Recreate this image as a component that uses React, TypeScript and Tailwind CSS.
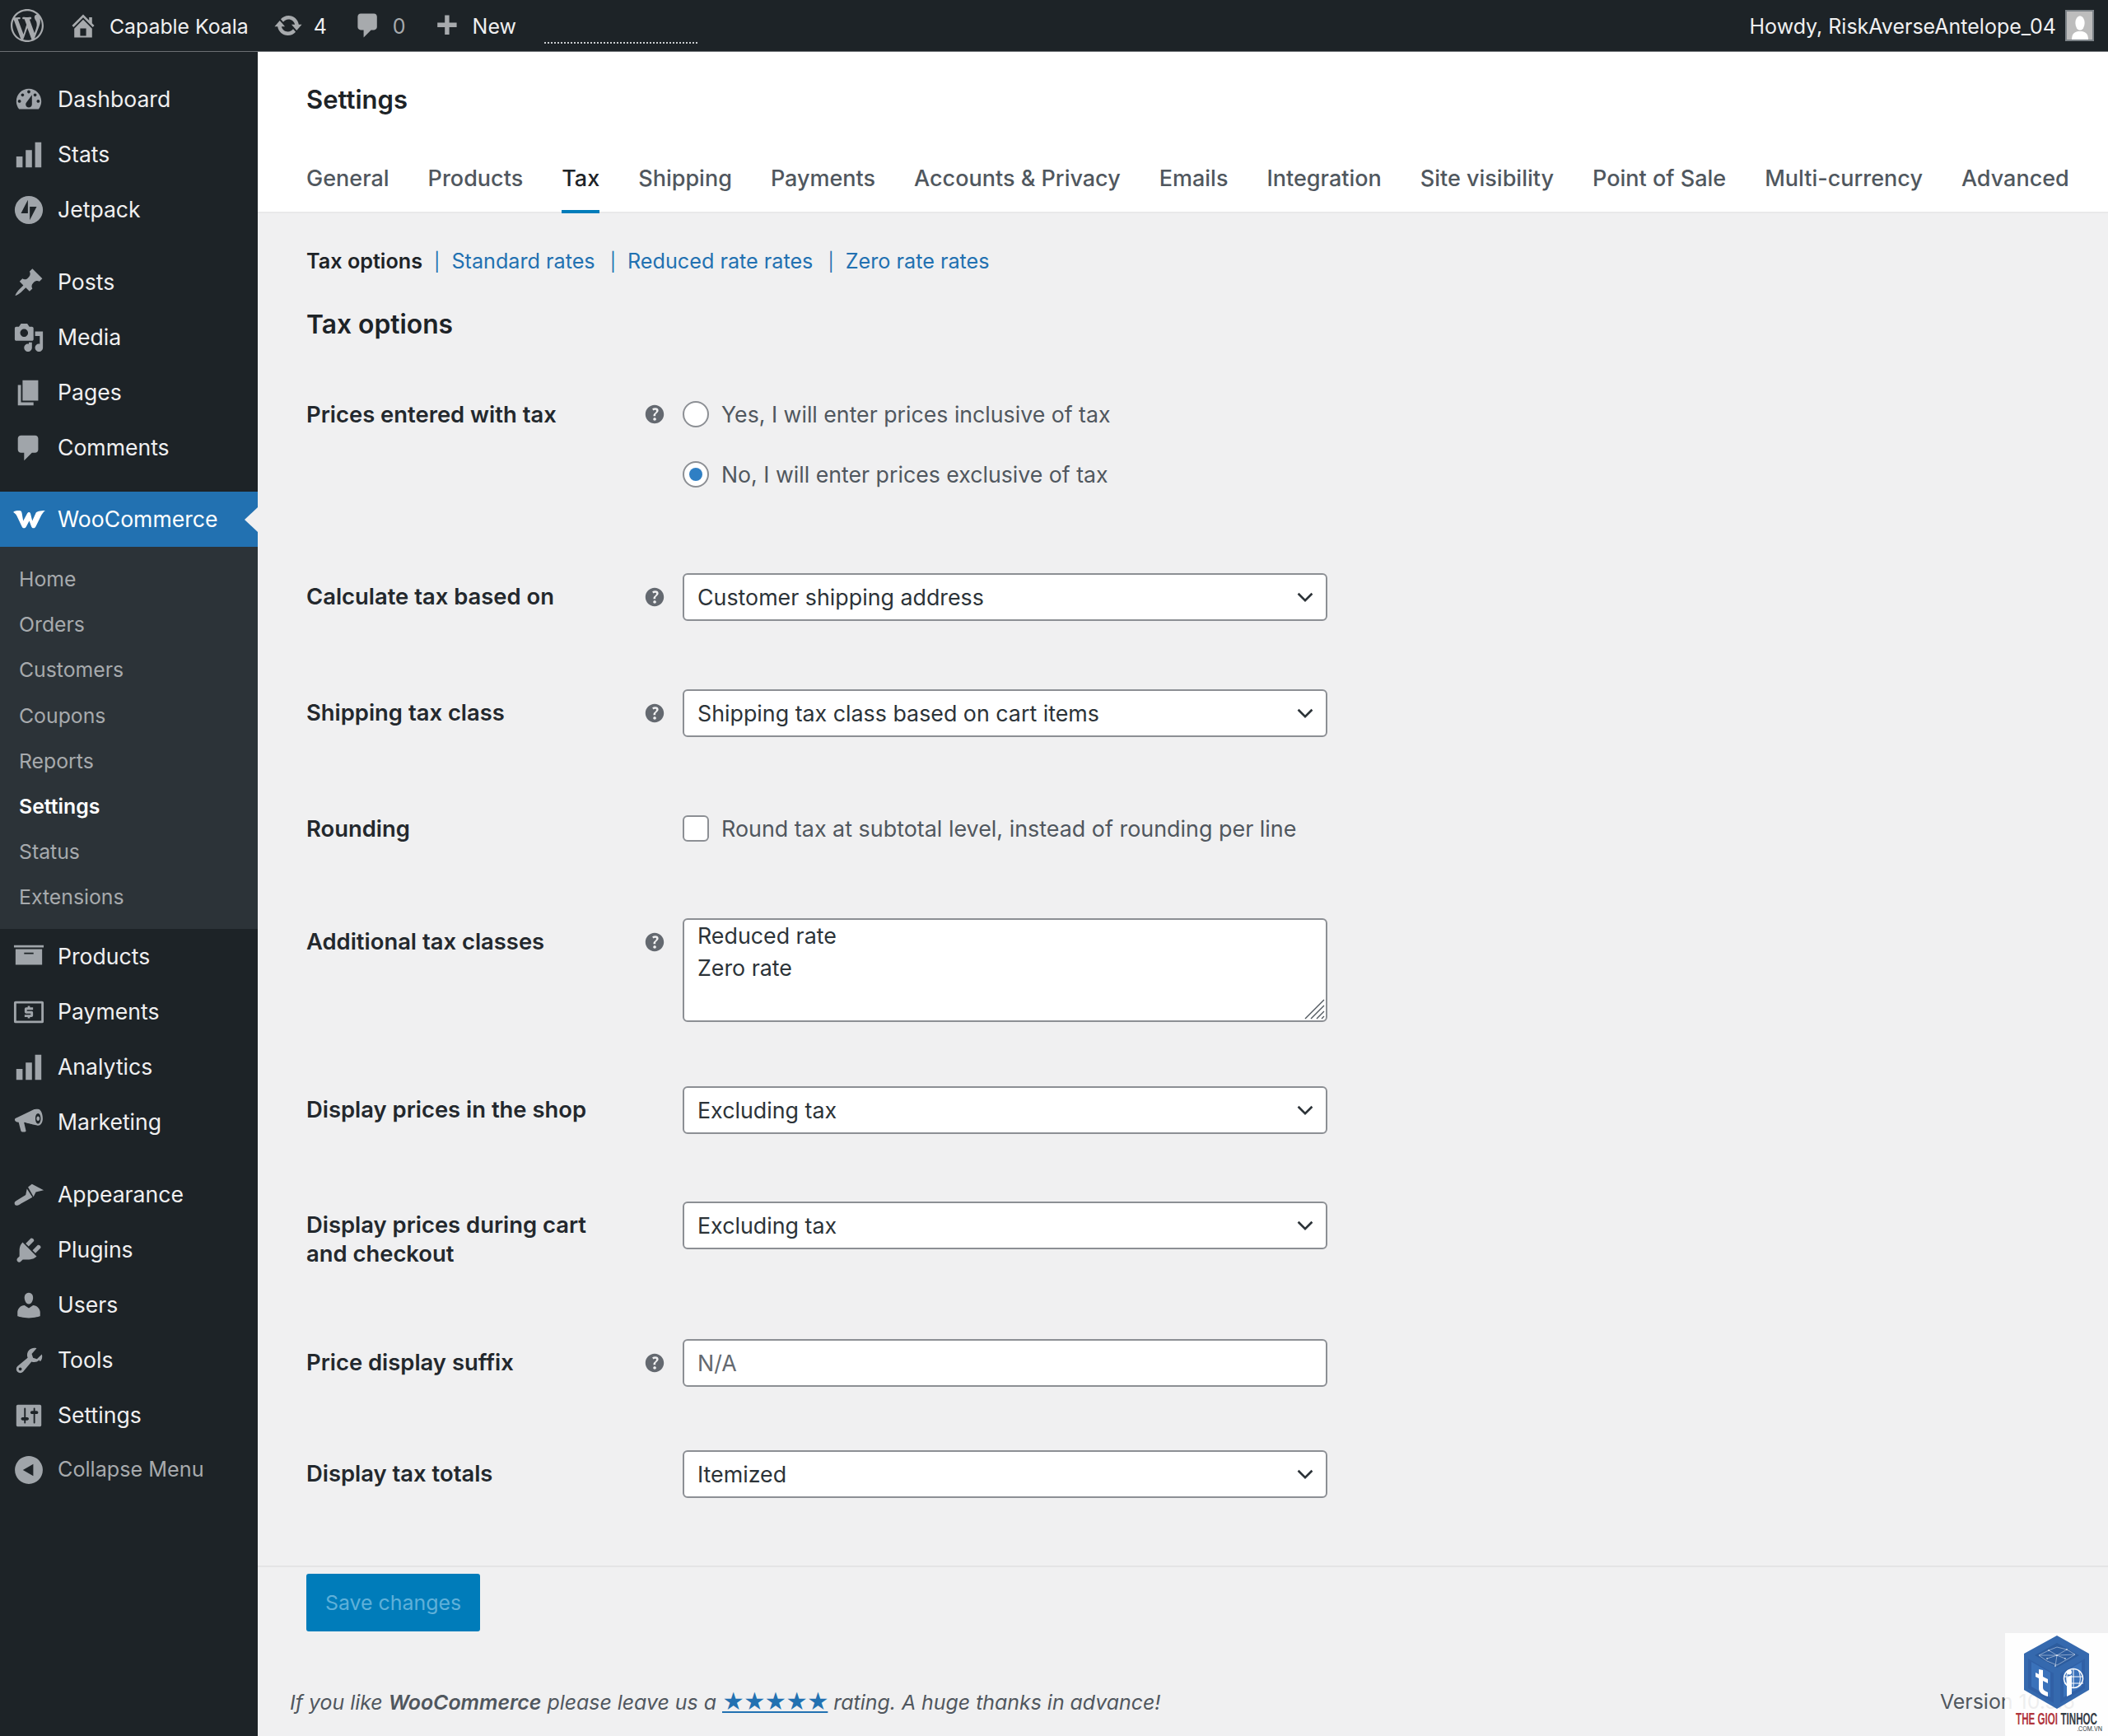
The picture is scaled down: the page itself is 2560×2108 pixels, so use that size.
import React from "react";

const D: Record<string, string> = {
  dashboard: "M3.76 16h12.48c1.1-1.37 1.76-3.11 1.76-5 0-4.42-3.58-8-8-8s-8 3.58-8 8c0 1.89.66 3.63 1.76 5zM10 4c.55 0 1 .45 1 1s-.45 1-1 1-1-.45-1-1 .45-1 1-1zM6 6c.55 0 1 .45 1 1s-.45 1-1 1-1-.45-1-1 .45-1 1-1zm8 0c.55 0 1 .45 1 1s-.45 1-1 1-1-.45-1-1 .45-1 1-1zm-5.37 5.55L12 7v6c0 1.1-.9 2-2 2s-2-.9-2-2c0-.57.24-1.08.63-1.45zM4 10c.55 0 1 .45 1 1s-.45 1-1 1-1-.45-1-1 .45-1 1-1zm12 0c.55 0 1 .45 1 1s-.45 1-1 1-1-.45-1-1 .45-1 1-1z",
  stats: "M2 11h4v7H2zM8 7h4v11H8zM14 2h4v16h-4z",
  jetpack: "M10 1a9 9 0 1 0 0 18 9 9 0 0 0 0-18zM9.4 3.5v8.6H5L9.4 3.5zM10.6 16.5V7.9H15l-4.4 8.6z",
  posts: "M10.44 3.02l1.82-1.82 6.36 6.35-1.83 1.82c-1.05-.68-2.48-.57-3.41.36l-.75.75c-.92.93-1.04 2.35-.35 3.41l-1.83 1.82-2.41-2.41-2.8 2.79c-.42.42-3.38 2.71-3.8 2.29s1.86-3.39 2.28-3.81l2.79-2.79L4.1 9.36l1.83-1.82c1.05.69 2.48.57 3.4-.36l.75-.75c.93-.92 1.05-2.35.36-3.41z",
  media: "M13 11V4c0-.55-.45-1-1-1h-1.67L9 1H5L3.67 3H2c-.55 0-1 .45-1 1v7c0 .55.45 1 1 1h10c.55 0 1-.45 1-1zM7 4.5c1.38 0 2.5 1.12 2.5 2.5S8.38 9.5 7 9.5 4.5 8.38 4.5 7 5.62 4.5 7 4.5zM14 6h5v10.5c0 1.38-1.12 2.5-2.5 2.5S14 17.88 14 16.5s1.12-2.5 2.5-2.5c.17 0 .34.02.5.05V9h-3V6zm-4 8.05V13h2v3.5c0 1.38-1.12 2.5-2.5 2.5S7 17.88 7 16.5 8.12 14 9.5 14c.17 0 .34.02.5.05z",
  pages: "M6 15V2h10v13H6zm-1 1h8v2H3V5h2v11z",
  comments: "M5 2h9c1.1 0 2 .9 2 2v7c0 1.1-.9 2-2 2h-2l-5 5v-5H5c-1.1 0-2-.9-2-2V4c0-1.1.9-2 2-2z",
  products: "M.5 2.5h19v1.5H.5zM1.5 5h17v10h-17zM7 7.2v1h6v-1z",
  payments: "M1.5 3h17a1 1 0 0 1 1 1v12a1 1 0 0 1-1 1h-17a1 1 0 0 1-1-1V4a1 1 0 0 1 1-1zM2 4.5v11h16v-11zM9.3 6h1.4v1h2v1.5H8.8v.8h3a1 1 0 0 1 .9 1v2a1 1 0 0 1-1 .9h-1v.8H9.3v-.8h-2v-1.5h3.9v-.8H8.200a1 1 0 0 1-.9-1V8a1 1 0 0 1 1-1h1z",
  marketing: "M18.9 7.5c0 2.5-1.3 4.5-3 4.5-1 0-9-2.1-9-2.1l1.2 5.100c.2.6-.1 1-.7 1H5.800c-.4 0-.8-.3-.9-.7L3.500 9.900C1.900 9.700 1 9 1 8.100c0-.8.9-1 2.100-1.500l9.800-4.700c1-.5 2-.4 2.900-.4 1.700 0 3.100 2.600 3.100 6zM15.900 4.200c-1 0-1.700 1.500-1.700 3.300s.7 3.300 1.700 3.300 1.700-1.500 1.700-3.300-.7-3.300-1.700-3.300zM15.900 6c.6 0 1 .7 1 1.500S16.500 9 15.900 9s-1-.7-1-1.500.4-1.500 1-1.500z",
  appearance: "M9.5 5L12 3l7.5 4-5 1.2-1.5 3zM8.800 6l3.500 5.500-2.300 1.200L5 15.500c-1 .8-2 1.200-3 1.200-1 0-1.500-1.500-.8-2.300.5-.7 1.500-1.200 2.300-1.700L8 10z",
  plugins: "M13.11 4.36L9.87 7.6 8 5.73l3.24-3.24c.35-.34 1.05-.2 1.56.32.52.51.66 1.21.31 1.55zm-8 1.77l.91-1.12 9.01 9.01-1.19.84c-.71.71-2.63 1.16-3.82 1.16H6.14L4.9 17.26c-.59.59-1.54.59-2.12 0-.59-.58-.59-1.53 0-2.12l1.24-1.24v-3.88c0-1.13.38-3.19 1.09-3.89zm7.26 3.97l3.24-3.24c.34-.35 1.04-.21 1.55.31.52.51.66 1.21.31 1.55l-3.24 3.25z",
  users: "M10 9.25c-2.27 0-2.73-3.44-2.73-3.44C7 4.02 7.82 2 9.97 2c2.16 0 2.98 2.02 2.71 3.81 0 0-.41 3.44-2.68 3.44zm0 2.57L12.72 10c2.39 0 4.52 2.33 4.52 4.53v2.49s-3.65 1.13-7.24 1.13c-3.65 0-7.24-1.13-7.24-1.13v-2.49c0-2.25 1.94-4.48 4.47-4.48z",
  tools: "M16.68 9.77c-1.34 1.34-3.3 1.67-4.95.99l-5.41 6.52c-.99.99-2.59.99-3.58 0s-.99-2.59 0-3.57l6.52-5.42c-.68-1.65-.35-3.61.99-4.95 1.28-1.28 3.12-1.64 4.72-1.11L11.88 5.82 12.7 8.3l2.49.83 3.13-3.13c.53 1.6.17 3.44-1.11 4.72zM3.81 16.21c.4.39 1.03.39 1.42 0 .4-.4.4-1.03 0-1.43-.39-.39-1.02-.39-1.42 0a1 1 0 0 0 0 1.43z",
  settings: "M18 16V4c0-.55-.45-1-1-1H3c-.55 0-1 .45-1 1v12c0 .55.45 1 1 1h14c.55 0 1-.45 1-1zM8 11h1c.55 0 1 .45 1 1s-.45 1-1 1H8v1.500c0 .28-.22.5-.5.5s-.5-.22-.5-.5V13H6c-.55 0-1-.45-1-1s.45-1 1-1h1V5.500c0-.28.22-.5.5-.5s.5.22.5.5V11zm5-2h-1c-.55 0-1-.45-1-1s.45-1 1-1h1V5.500c0-.28.22-.5.5-.5s.5.22.5.5V7h1c.55 0 1 .45 1 1s-.45 1-1 1h-1v5.500c0 .28-.22.5-.5.5s-.5-.22-.5-.5V9z",
  collapse: "M10 .6c5.2 0 9.4 4.2 9.4 9.4s-4.2 9.4-9.4 9.4S.6 15.2.6 10 4.8.6 10 .6zM13 14V6l-7 4z",
  wp: "M20 10c0-5.51-4.49-10-10-10C4.48 0 0 4.49 0 10c0 5.52 4.48 10 10 10 5.51 0 10-4.48 10-10zM7.78 15.37L4.37 6.22c.55-.02 1.17-.08 1.17-.08.5-.06.44-1.13-.06-1.11 0 0-1.45.11-2.37.11-.18 0-.37 0-.58-.01C4.12 2.69 6.87 1.11 10 1.11c2.33 0 4.45.87 6.05 2.34-.68-.11-1.65.39-1.65 1.58 0 .74.45 1.36.9 2.1.35.61.55 1.36.55 2.46 0 1.49-1.4 5-1.4 5l-3.03-8.35c.54-.02.82-.17.82-.17.5-.05.44-1.25-.06-1.22 0 0-1.44.12-2.38.12-.87 0-2.33-.12-2.33-.12-.5-.03-.56 1.2-.06 1.22l.92.08 1.26 3.41zM17.41 10c.24-.64.74-1.87.43-4.25.7 1.29 1.05 2.71 1.05 4.25 0 3.29-1.73 6.24-4.4 7.78.97-2.59 1.94-5.2 2.92-7.78zM6.1 18.09C3.12 16.65 1.11 13.53 1.11 10c0-1.3.23-2.48.72-3.59C3.25 10.3 4.67 14.2 6.1 18.09zm4.03-6.63l2.58 6.98c-.85.29-1.74.45-2.71.45-.81 0-1.61-.11-2.35-.34 0 0 2.48-7.09 2.48-7.09z",
  home: "M16 8.5l1.53 1.53-1.06 1.06L10 4.62l-6.47 6.47-1.06-1.06L10 2.5l4 4v-2h2v4zm-6-2.46l6 5.99V18H4v-5.97zM12 17v-5H8v5h4z",
  update: "M10.2 3.28c3.53 0 6.43 2.61 6.92 6h2.08l-3.5 4-3.5-4h2.32c-.45-1.97-2.21-3.44-4.32-3.44-1.45 0-2.73.71-3.54 1.78L4.95 5.66C6.23 4.2 8.11 3.28 10.2 3.28zm-.4 13.44c-3.52 0-6.43-2.61-6.92-6H.8l3.5-4c1.17 1.33 2.33 2.67 3.5 4H5.48c.45 1.97 2.21 3.44 4.32 3.44 1.45 0 2.73-.71 3.54-1.78l1.71 1.95c-1.28 1.46-3.15 2.39-5.25 2.39z",
  plus: "M17 7v3h-5v5H9v-5H4V7h5V2h3v5h5z",
  help: "M17 10c0-3.87-3.13-7-7-7s-7 3.13-7 7 3.13 7 7 7 7-3.13 7-7zm-6.3 1.48H9.06v-.48c0-.41.08-.76.24-1.04.16-.29.46-.61.9-.97.42-.34.7-.62.84-.83.14-.21.21-.47.21-.76 0-.22-.08-.4-.22-.52-.15-.12-.36-.18-.63-.18-.5 0-.91.14-1.5.42l-.68-1.39c.7-.39 1.51-.6 2.31-.6.72 0 1.29.18 1.71.53.42.35.63.84.63 1.46 0 .28-.04.52-.12.74-.08.22-.21.43-.38.63s-.46.47-.87.81c-.33.26-.55.48-.66.65-.11.17-.14.3-.14.53zm-1.78 2.27c0-.36.09-.65.29-.84.19-.19.47-.29.83-.29.35 0 .63.1.82.29.19.2.29.48.29.84 0 .34-.1.62-.3.83-.2.2-.47.31-.81.31s-.62-.11-.83-.31c-.19-.2-.29-.49-.29-.83z",
};

function Dash({ name, className }: { name: string; className: string }) {
  return (
    <svg viewBox="0 0 20 20" className={className} fill="currentColor">
      <path d={D[name]} fillRule="evenodd" />
    </svg>
  );
}

function Side({ icon, label }: { icon: string; label: string }) {
  return (
    <div className="flex h-[67px] items-center">
      <div className="flex w-[70px] justify-center">
        <Dash name={icon} className="h-[38px] w-[38px] text-[#a0a5aa]" />
      </div>
      <span className="text-[26.6px] text-[#f0f0f1]">{label}</span>
    </div>
  );
}

function Sub({ label, on }: { label: string; on?: boolean }) {
  return (
    <div className={"flex h-[55.2px] items-center pl-[23px] text-[24.8px] " + (on ? "font-semibold text-white" : "text-[#a7aaad]")}>
      {label}
    </div>
  );
}

function Help() {
  return <Dash name="help" className="ml-[-1px] h-[32px] w-[32px] text-[#646970]" />;
}

function Label({ children }: { children: React.ReactNode }) {
  return <div className="w-[408px] shrink-0 pr-[30px] pt-[11px] text-[27.4px] font-semibold leading-[35px] text-[#23282d]">{children}</div>;
}

function HelpCell({ show }: { show?: boolean }) {
  return <div className="w-[49px] shrink-0 pt-[13px]">{show ? <Help /> : null}</div>;
}

function Select({ value }: { value: string }) {
  return (
    <div className="relative h-[58px] w-[783px]">
      <select
        defaultValue={value}
        className="h-full w-full appearance-none rounded-[6px] border-2 border-[#8c8f94] bg-white pl-[16px] text-[26.8px] text-[#2c3338] outline-none"
      >
        <option>{value}</option>
      </select>
      <svg viewBox="0 0 20 20" className="pointer-events-none absolute right-[15px] top-[17px] h-[24px] w-[24px]" fill="none" stroke="#2c3338" strokeWidth="2.2">
        <path d="M3 6.5l7 7 7-7" />
      </svg>
    </div>
  );
}

const tabs = ["General", "Products", "Tax", "Shipping", "Payments", "Accounts & Privacy", "Emails", "Integration", "Site visibility", "Point of Sale", "Multi-currency", "Advanced"];

export default function App() {
  return (
    <div className="relative flex h-[2108px] w-[2560px] flex-col overflow-hidden bg-[#f0f0f1]" style={{ fontFamily: "Inter, 'Liberation Sans', sans-serif" }}>
      {/* Admin bar */}
      <header className="flex h-[63px] shrink-0 items-center justify-between border-b border-[#6b6f73] bg-[#1d2327] text-[25px] text-[#f0f0f1]">
        <div className="flex items-center">
          <Dash name="wp" className="ml-[13px] h-[40px] w-[40px] text-[#a7aaad]" />
          <Dash name="home" className="ml-[30px] h-[36px] w-[36px] text-[#a7aaad]" />
          <span className="ml-[14px] mt-[3px] text-[24.8px]">Capable Koala</span>
          <Dash name="update" className="ml-[30px] h-[36px] w-[36px] text-[#a7aaad]" />
          <span className="ml-[13px] mt-[3px]">4</span>
          <Dash name="comments" className="ml-[32px] h-[36px] w-[36px] text-[#a7aaad]" />
          <span className="ml-[12px] mt-[3px] text-[#a7aaad]">0</span>
          <Dash name="plus" className="ml-[31px] mt-[3px] h-[36px] w-[36px] text-[#a7aaad]" />
          <span className="ml-[14px] mt-[3px]">New</span>
          <div className="ml-[34px] mt-[42px] h-0 w-[186px] border-t-2 border-dotted border-[#c9cccf]"></div>
        </div>
        <div className="mr-[17px] flex items-center">
          <span className="mt-[3px]">Howdy, RiskAverseAntelope_04</span>
          <div className="ml-[11px] flex h-[38px] w-[35px] items-end justify-center overflow-hidden border-2 border-[#7d8388] bg-[#bdbdbd]">
            <svg viewBox="0 0 20 24" className="h-[30px] w-[26px]" fill="#fff">
              <ellipse cx="10" cy="8" rx="4.5" ry="7" />
              <path d="M2 24c0-6 3-8 8-8s8 2 8 8z" />
            </svg>
          </div>
        </div>
      </header>

      <div className="flex flex-1">
        {/* Sidebar */}
        <nav className="flex w-[313px] shrink-0 flex-col bg-[#1d2327] pt-[24px]">
          <Side icon="dashboard" label="Dashboard" />
          <Side icon="stats" label="Stats" />
          <Side icon="jetpack" label="Jetpack" />
          <div className="h-[21px]"></div>
          <Side icon="posts" label="Posts" />
          <Side icon="media" label="Media" />
          <Side icon="pages" label="Pages" />
          <Side icon="comments" label="Comments" />
          <div className="h-[20px]"></div>
          <div className="relative flex h-[67px] items-center bg-[#2271b1]">
            <div className="flex w-[70px] justify-center">
              <svg viewBox="0 0 38 21" className="h-[22px] w-[40px]" fill="#fff">
                <path d="M1 2C2 .5 4 0 8 0c2 0 2.5 1 3 3l1.500 9L17 3.500c1-2 3.500-2 4 0L23 12l4-9c1-2.200 5-3 11-3-2 1.500-4 4-5.500 7.500L27 18.500C25.700 21 23 21 22 18.500L19.500 12 16 18.500C14.700 21 12 21 11 18.500L5 6C4 4 2.500 3 1 2z" />
              </svg>
            </div>
            <span className="text-[26.6px] text-white">WooCommerce</span>
            <div className="absolute right-0 top-1/2 h-0 w-0 -translate-y-1/2 border-y-[15px] border-r-[16px] border-y-transparent border-r-[#f0f0f1]"></div>
          </div>
          <div className="bg-[#2c3338] pb-[10px] pt-[12px]">
            {["Home", "Orders", "Customers", "Coupons", "Reports"].map((s) => (
              <Sub key={s} label={s} />
            ))}
            <Sub label="Settings" on />
            <Sub label="Status" />
            <Sub label="Extensions" />
          </div>
          <div className="h-[1px]"></div>
          <Side icon="products" label="Products" />
          <Side icon="payments" label="Payments" />
          <Side icon="stats" label="Analytics" />
          <Side icon="marketing" label="Marketing" />
          <div className="h-[21px]"></div>
          <Side icon="appearance" label="Appearance" />
          <Side icon="plugins" label="Plugins" />
          <Side icon="users" label="Users" />
          <Side icon="tools" label="Tools" />
          <Side icon="settings" label="Settings" />
          <div className="flex h-[64px] items-center">
            <div className="flex w-[70px] justify-center">
              <Dash name="collapse" className="h-[36px] w-[36px] text-[#a0a5aa]" />
            </div>
            <span className="text-[25.2px] text-[#a7aaad]">Collapse Menu</span>
          </div>
        </nav>

        {/* Main */}
        <main className="flex flex-1 flex-col">
          <div className="h-[196px] shrink-0 border-b-2 border-[#e9e9ea] bg-white pl-[59px]">
            <h1 className="pt-[38px] text-[31px] font-semibold leading-[40px] text-[#1d2327]">Settings</h1>
            <div className="mt-[35px] flex gap-[47px]">
              {tabs.map((t) => (
                <div
                  key={t}
                  className={
                    "flex h-[83px] items-center border-b-[4px] pt-[4px] text-[27px] font-medium " +
                    (t === "Tax" ? "border-[#007cba] text-[#1d2327]" : "border-transparent text-[#50575e]")
                  }
                >
                  {t}
                </div>
              ))}
            </div>
          </div>

          <div className="flex flex-col pl-[59px]">
            <div className="mt-[43px] flex h-[32px] items-center text-[25.2px] text-[#2271b1]">
              <span className="font-semibold text-[#1d2327]">Tax options</span>
              <span className="ml-[14px] mr-[14px] text-[22px]">|</span>
              <span>Standard rates</span>
              <span className="ml-[18px] mr-[14px] text-[22px]">|</span>
              <span>Reduced rate rates</span>
              <span className="ml-[18px] mr-[14px] text-[22px]">|</span>
              <span>Zero rate rates</span>
            </div>
            <h2 className="mt-[39px] h-[42px] text-[31.8px] font-semibold leading-[42px] text-[#1d2327]">Tax options</h2>

            <div className="mt-[68px] flex items-start">
              <div className="w-[408px] shrink-0 text-[27.4px] font-semibold leading-[40px] text-[#23282d]">Prices entered with tax</div>
              <div className="w-[49px] shrink-0 pt-[4px]"><Help /></div>
              <div className="flex flex-col gap-[33px]">
                <div className="flex h-[40px] items-center gap-[15px] text-[26.7px] text-[#50575e]">
                  <span className="h-[32px] w-[32px] rounded-full border-2 border-[#8c8f94] bg-white"></span>
                  Yes, I will enter prices inclusive of tax
                </div>
                <div className="flex h-[40px] items-center gap-[15px] text-[26.7px] text-[#50575e]">
                  <span className="flex h-[32px] w-[32px] items-center justify-center rounded-full border-2 border-[#8c8f94] bg-white">
                    <span className="h-[16px] w-[16px] rounded-full bg-[#2f7fc4]"></span>
                  </span>
                  No, I will enter prices exclusive of tax
                </div>
              </div>
            </div>

            <div className="mt-[100px] flex items-start">
              <Label>Calculate tax based on</Label>
              <HelpCell show />
              <Select value="Customer shipping address" />
            </div>
            <div className="mt-[83px] flex items-start">
              <Label>Shipping tax class</Label>
              <HelpCell show />
              <Select value="Shipping tax class based on cart items" />
            </div>
            <div className="mt-[91px] flex items-center">
              <div className="w-[408px] shrink-0 text-[27.4px] font-semibold leading-[40px] text-[#23282d]">Rounding</div>
              <div className="w-[49px] shrink-0"></div>
              <div className="flex h-[40px] items-center gap-[15px] text-[26.9px] text-[#50575e]">
                <span className="h-[32px] w-[32px] rounded-[6px] border-2 border-[#8c8f94] bg-white"></span>
                Round tax at subtotal level, instead of rounding per line
              </div>
            </div>
            <div className="mt-[89px] flex items-start">
              <Label>Additional tax classes</Label>
              <HelpCell show />
              <div className="relative h-[126px] w-[783px]">
                <textarea
                  defaultValue={"Reduced rate\nZero rate"}
                  className="h-full w-full resize-none rounded-[6px] border-2 border-[#8c8f94] bg-white px-[16px] py-0 text-[26.8px] leading-[39px] text-[#2c3338] outline-none"
                />
                <svg viewBox="0 0 26 26" className="pointer-events-none absolute bottom-[3px] right-[3px] h-[26px] w-[26px]" stroke="#50575e" strokeWidth="1.4">
                  <path d="M2 25L25 2M9 25L25 9M16 25l9-9M22 25l3-3" />
                </svg>
              </div>
            </div>
            <div className="mt-[78px] flex items-start">
              <Label>Display prices in the shop</Label>
              <HelpCell />
              <Select value="Excluding tax" />
            </div>
            <div className="mt-[82px] flex h-[58px] items-start">
              <Label>Display prices during cart and checkout</Label>
              <HelpCell />
              <Select value="Excluding tax" />
            </div>
            <div className="mt-[109px] flex items-start">
              <Label>Price display suffix</Label>
              <HelpCell show />
              <input
                placeholder="N/A"
                className="h-[58px] w-[783px] rounded-[6px] border-2 border-[#8c8f94] bg-white px-[16px] text-[26.8px] outline-none placeholder:text-[#646970]"
              />
            </div>
            <div className="mt-[77px] flex items-start">
              <Label>Display tax totals</Label>
              <HelpCell />
              <Select value="Itemized" />
            </div>
          </div>

          <div className="mt-[82px] border-t-2 border-[#e4e4e5] pl-[59px]">
            <button className="mt-[8px] h-[70px] w-[211px] rounded-[3px] bg-[#007cba] pt-[2px] text-[24.9px] text-[#5fb0d9]">Save changes</button>
          </div>

          <footer className="mt-[66px] flex items-center justify-between pl-[39px] pr-[40px] text-[24.9px] text-[#50575e]">
            <div className="italic">
              If you like <b className="font-semibold">WooCommerce</b> please leave us a{" "}
              <span className="text-[26px] not-italic text-[#2271b1] underline decoration-2 underline-offset-2" style={{ letterSpacing: "-1.5px" }}>★★★★★</span> rating. A huge thanks in advance!
            </div>
            <div>Version 10.3.6</div>
          </footer>
        </main>
      </div>

      {/* Watermark */}
      <div className="absolute bottom-0 right-0 flex h-[125px] w-[125px] flex-col items-center bg-white/90">
        <svg viewBox="0 0 79 89" className="mt-[3px] h-[89px] w-[79px] shrink-0">
          <path d="M40 0l39 22v44L40 89 0 66V22z" fill="#3569ae" />
          <path d="M40 9l27 15-27 15-27-15z" fill="#2c5c9e" />
          <path d="M5 28l31 18v36L5 64z" fill="#3060a6" />
          <path d="M74 28L44 46v36l30-18z" fill="#3060a6" />
          <path d="M9 32l23 13v30L9 62zM70 32L48 45v30l22-13z" fill="#3a72ba" />
          <g stroke="#e6edf7" strokeWidth=".5" fill="none">
            <path d="M18 24l12-6 10-4 12 3 10 6-8 5-14 8-12-5zM30 18l10 6 12-7M40 24l-12 4M40 24l10 4M40 24l-2 13M18 24l22 0 22-1" />
          </g>
          <g fill="#fff">
            <circle cx="30" cy="18" r=".8" /><circle cx="40" cy="24" r=".8" /><circle cx="52" cy="17" r=".8" /><circle cx="28" cy="28" r=".8" /><circle cx="50" cy="28" r=".8" /><circle cx="38" cy="37" r=".8" />
          </g>
          <path d="M18 41l5 1v8l6 3v5l-6-3v8c0 3 2 4 6 6v5c-7-2-11-5-11-10V52l-4-2v-5l4 2z" fill="#fff" />
          <circle cx="60" cy="52" r="11.5" fill="none" stroke="#fff" strokeWidth="1.5" />
          <path d="M60 40.5v23M49 50h23M49 58h23M54 42c-3 6-3 14 0 20M66 42c3 6 3 14 0 20" stroke="#fff" strokeWidth="1" fill="none" />
          <path d="M52 51l6-3v23l-6 3z" fill="#fff" />
          <circle cx="55" cy="44.5" r="3" fill="#fff" />
        </svg>
        <div className="mt-[3px] flex h-[18px] w-full scale-x-[0.58] justify-center whitespace-nowrap text-[20px] font-bold leading-[18px]" style={{ fontFamily: "'Liberation Sans', sans-serif" }}>
          <span className="text-[#b0353c]">THE GIOI</span>
          <span className="ml-[6px] text-[#333b44]">TINHOC</span>
        </div>
        <div className="w-full pr-[7px] text-right text-[7px] leading-[8px] text-[#333b44]">.COM.VN</div>
      </div>
    </div>
  );
}
